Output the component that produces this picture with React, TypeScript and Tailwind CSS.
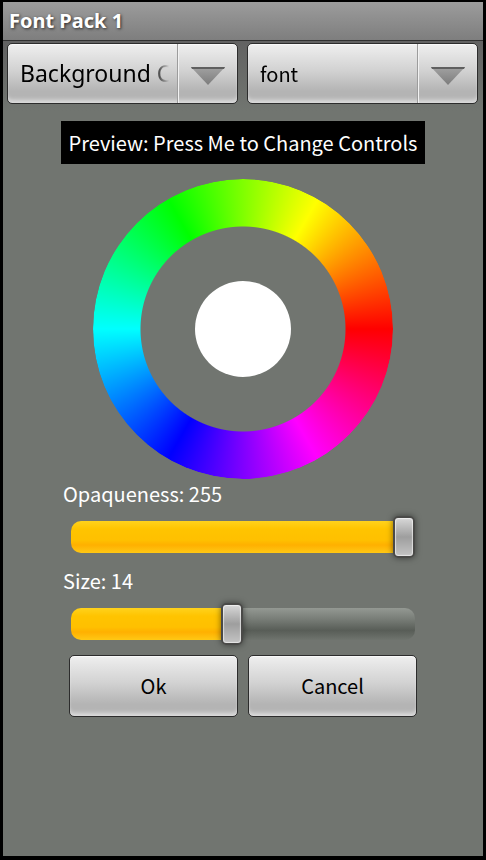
import { useState, type CSSProperties } from "react";

const face =
  "rounded-[5px] border border-[#2c2c2c] bg-linear-to-b from-[#efefef] via-[#d2d2d2] via-45% to-[#b4b4b4] to-80% shadow-[inset_0_-5px_4px_-2px_rgba(255,255,255,0.55),inset_0_1px_1px_rgba(255,255,255,0.7)]";

const targets = ["Background Color", "Font Color"];
const kinds = ["font", "icon"];

type SpinnerProps = {
  label: string;
  options: string[];
  textSize: string;
};

function Spinner({ label, options, textSize }: SpinnerProps) {
  const [value, setValue] = useState(options[0]);

  return (
    <label className={`flex h-[61px] min-w-0 flex-1 ${face}`}>
      <select
        aria-label={label}
        value={value}
        onChange={(e) => setValue(e.target.value)}
        className={`min-w-0 flex-1 appearance-none overflow-hidden bg-transparent mask-r-from-[calc(100%-24px)] mask-r-to-[calc(100%-8px)] pl-3 text-clip whitespace-nowrap text-black outline-none ${textSize}`}
      >
        {options.map((o) => (
          <option key={o}>{o}</option>
        ))}
      </select>
      <span className="flex w-[60px] shrink-0 items-center justify-center border-l border-[#9c9c9c] shadow-[inset_1px_0_0_#f2f2f2]">
        <svg viewBox="0 0 34 18" className="mt-1 h-[18px] w-[34px]" aria-hidden="true">
          <defs>
            <linearGradient id="arrow" x1="0" y1="0" x2="0" y2="1">
              <stop offset="0" stopColor="#a2a2a2" />
              <stop offset="1" stopColor="#7c7c7c" />
            </linearGradient>
          </defs>
          <path d="M0 0H34L17 18Z" fill="url(#arrow)" />
          <path d="M0 0H34L33 2H1Z" fill="#5f5f5f" />
        </svg>
      </span>
    </label>
  );
}

type SeekBarProps = {
  id: string;
  label: string;
  max: number;
  value: number;
  onChange: (value: number) => void;
};

function SeekBar({ id, label, max, value, onChange }: SeekBarProps) {
  // the fill ends under the middle of the 22px thumb
  const style = { "--fill": `calc(11px + (100% - 22px) * ${value / max})` } as CSSProperties;

  return (
    <div>
      <label htmlFor={id} className="block px-0.5 text-[20px] leading-[30px] text-white">
        {label}: {value}
      </label>
      <div className="mt-[7px] px-2.5">
        <input
          id={id}
          type="range"
          min={0}
          max={max}
          value={value}
          onChange={(e) => onChange(Number(e.target.value))}
          style={style}
          className="block h-[42px] w-full appearance-none bg-transparent outline-none [&::-webkit-slider-runnable-track]:h-8 [&::-webkit-slider-runnable-track]:rounded-[10px] [&::-webkit-slider-runnable-track]:bg-[linear-gradient(#ffd21c,#ffc400_25%,#ffc000_60%,#ffb000_75%,#ffc814),linear-gradient(#949993,#7c817b_30%,#585d57_70%,#6f746e)] [&::-webkit-slider-runnable-track]:bg-[size:var(--fill)_100%,100%_100%] [&::-webkit-slider-runnable-track]:bg-no-repeat [&::-webkit-slider-thumb]:-mt-[5px] [&::-webkit-slider-thumb]:h-[42px] [&::-webkit-slider-thumb]:w-[22px] [&::-webkit-slider-thumb]:appearance-none [&::-webkit-slider-thumb]:rounded-[5px] [&::-webkit-slider-thumb]:border-2 [&::-webkit-slider-thumb]:border-[#4a4a48] [&::-webkit-slider-thumb]:bg-[linear-gradient(#d8d8d8,#9e9e9e_50%,#c4c4c4)] [&::-webkit-slider-thumb]:shadow-[0_0_6px_rgba(0,0,0,0.5),inset_0_0_1px_1px_rgba(255,255,255,0.6)]"
        />
      </div>
    </div>
  );
}

function ColorWheel() {
  return (
    <div className="mx-auto grid size-[300px] place-items-center">
      <div className="col-start-1 row-start-1 size-full rounded-full bg-[conic-gradient(from_90deg,red,magenta,blue,cyan,lime,yellow,red)] mask-radial-[closest-side] mask-radial-from-transparent mask-radial-from-[102px] mask-radial-to-black mask-radial-to-[103px]" />
      <button type="button" aria-label="Use color" className="col-start-1 row-start-1 size-24 rounded-full bg-white" />
    </div>
  );
}

export default function App() {
  const [opaqueness, setOpaqueness] = useState(255);
  const [size, setSize] = useState(14);

  return (
    <div className="flex min-h-screen flex-col border-x-[3px] border-t-2 border-b-4 border-black bg-[#717570] font-['Noto_Sans_CJK_SC','Noto_Sans',sans-serif]">
      <header className="border-b border-[#303030] bg-linear-to-b from-[#9c9c9c] to-[#7e7e7e] px-1.5">
        <h1 className="font-['Noto_Sans',sans-serif] text-[20px] leading-[38px] font-bold text-white text-shadow-[1px_1px_3px_rgba(0,0,0,0.7)]">Font Pack 1</h1>
      </header>

      <main className="bg-linear-to-b from-[#626262] to-transparent to-[70px]">
        <div className="flex gap-[9px] pt-0.5 pr-[5px] pl-1">
          <Spinner label="Color target" options={targets} textSize="font-['Noto_Sans',sans-serif] text-[23px]" />
          <Spinner label="Item" options={kinds} textSize="text-[20px]" />
        </div>

        <div className="mx-auto mt-[17px] w-full max-w-[364px]">
          <button type="button" className="block w-full bg-black text-[20px] leading-[43px] whitespace-nowrap text-white">
            Preview: Press Me to Change Controls
          </button>
          <div className="mt-[15px]">
            <ColorWheel />
          </div>
          <div className="flex flex-col gap-2">
            <SeekBar id="opaqueness" label="Opaqueness" max={255} value={opaqueness} onChange={setOpaqueness} />
            <SeekBar id="size" label="Size" max={30} value={size} onChange={setSize} />
          </div>
          <div className="mt-2.5 flex gap-2.5 px-2 text-[20px] text-black">
            <button type="button" className={`h-[62px] flex-1 ${face}`}>Ok</button>
            <button type="button" className={`h-[62px] flex-1 ${face}`}>Cancel</button>
          </div>
        </div>
      </main>
    </div>
  );
}
